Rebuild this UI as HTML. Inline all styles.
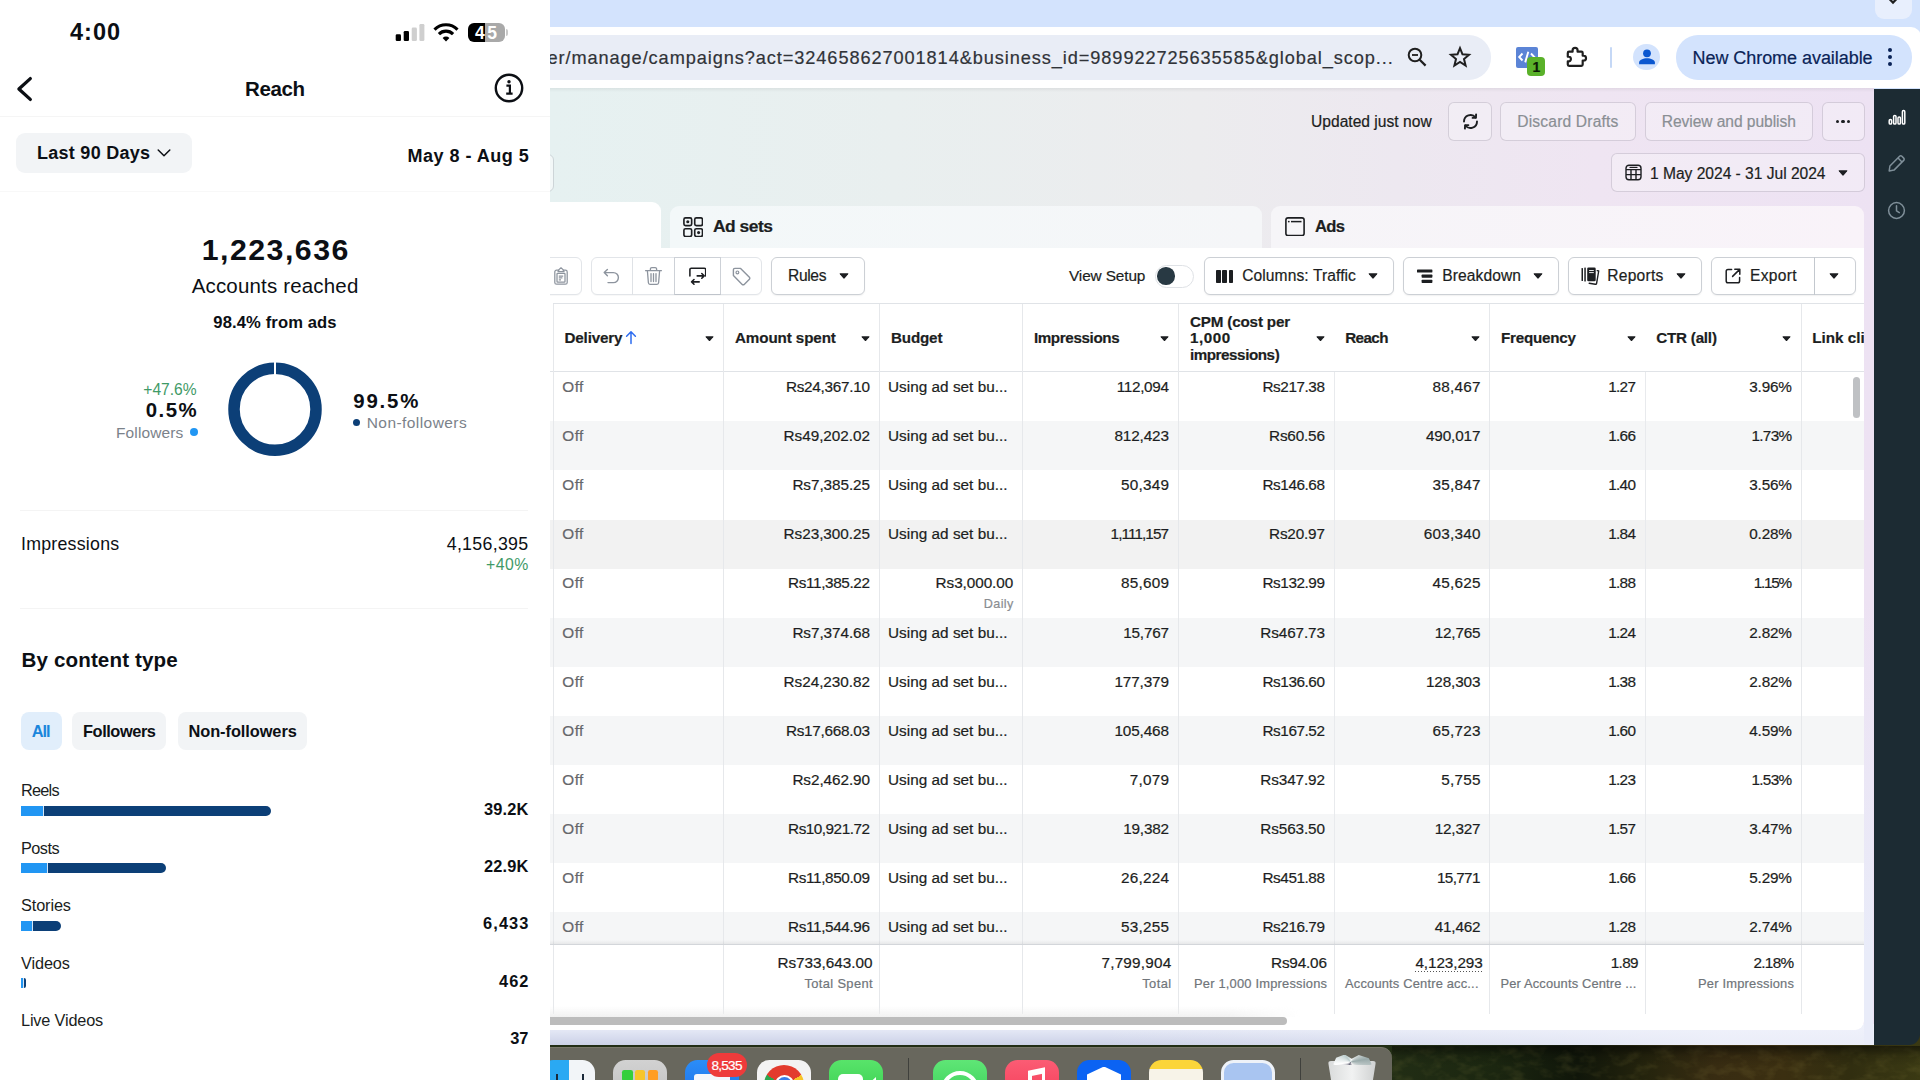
<!DOCTYPE html>
<html>
<head>
<meta charset="utf-8">
<title>Reach</title>
<style>
*{box-sizing:border-box;margin:0;padding:0}
html,body{width:1920px;height:1080px;overflow:hidden;background:#fff;font-family:"Liberation Sans",sans-serif;color:#1c1e21}
.abs{position:absolute}
.t{position:absolute;white-space:nowrap;line-height:1}
.b{font-weight:bold}
/* ---------- PHONE ---------- */
#phone{position:absolute;left:0;top:0;width:550px;height:1080px;background:#fff;overflow:hidden;color:#0f1419;z-index:5}
#phone .sep{position:absolute;height:1px;background:#efefef}
.chip{position:absolute;height:39px;top:711px;border-radius:8px;background:#f1f3f5;font-weight:bold;font-size:15.5px;line-height:39px;text-align:center;color:#111}
.ct-l{position:absolute;left:21px;font-size:15px;line-height:1;color:#222}
.ct-v{position:absolute;right:21px;font-size:15.5px;font-weight:bold;line-height:1;color:#111}
.bar{position:absolute;left:21px;height:9px;border-radius:0 5px 5px 0;background:#0b3c73;overflow:hidden}
.bar i{position:absolute;left:0;top:0;bottom:0;background:#1e96f0;border-right:1px solid #cfe3f7}
/* ---------- CHROME ---------- */
#chrome{position:absolute;left:0;top:0;width:1920px;height:1080px;overflow:hidden;color:#1c1e21}
#chrome .t{-webkit-text-stroke:0.2px}
.btn{position:absolute;border:1px solid #ccd0d5;border-radius:6px;background:#fff;box-shadow:0 1px 1px rgba(0,0,0,.04)}
.car{position:absolute;width:0;height:0;border-left:5px solid transparent;border-right:5px solid transparent;border-top:5.5px solid #1c1e21;border-radius:2px}
</style>
</head>
<body>
<div id="chrome">
<div class="abs" style="left:550.0px;top:1025.0px;width:1370.0px;height:55.0px;background:linear-gradient(90deg,#222e15 0%,#222e15 61%,#1b2610 69%,#10160a 75%,#25240d 80%,#382c12 85%,#3b2f11 90%,#312e10 95%,#3a3913 100%)"></div>
<svg class="abs" style="left:1392px;top:1046px" width="528" height="34"><filter id="nz" x="0" y="0" width="100%" height="100%"><feTurbulence type="fractalNoise" baseFrequency="0.06 0.1" numOctaves="3" seed="7"/><feColorMatrix type="matrix" values="0 0 0 0 0.5  0 0 0 0 0.42  0 0 0 0 0.1  1.5 0 0 0 -0.68"/></filter><rect width="528" height="34" filter="url(#nz)" opacity="0.22"/></svg>
<div class="abs" style="left:1392.0px;top:1046.0px;width:528.0px;height:34.0px;background:linear-gradient(180deg,rgba(0,0,0,.5) 0,rgba(0,0,0,.12) 10px,rgba(0,0,0,0) 20px)"></div>
<div class="abs" style="left:540.0px;top:1046.5px;width:851.5px;height:43.5px;background:#68675d;border-radius:0 11px 0 0;border-top:1px solid #787769"></div>
<div class="abs" style="left:550.0px;top:0.0px;width:1370.0px;height:90.0px;background:#d3e3fd"></div>
<div class="abs" style="left:1875.0px;top:-10.0px;width:37.0px;height:28.5px;background:#e8effd;border-radius:9px"></div>
<svg class="abs" style="left:1887px;top:-2px" width="12" height="8" viewBox="0 0 12 8"><path d="M1.5 0 L6 4.6 L10.5 0" fill="none" stroke="#1f1f1f" stroke-width="2.2"/></svg>
<div class="abs" style="left:540.0px;top:26.7px;width:1381.0px;height:61.5px;background:#fff;border-radius:0 10px 0 0"></div>
<div class="abs" style="left:500.0px;top:35.4px;width:991.0px;height:44.2px;background:#e9edf6;border-radius:22px"></div>
<div class="t" style="left:547.5px;top:48.5px;font-size:18.20px;letter-spacing:0.91px;color:#303338;">er/manage/campaigns?act=324658627001814&amp;business_id=989922725635585&amp;global_scop...</div>
<svg class="abs" style="left:1405px;top:45px" width="24" height="24" viewBox="0 0 24 24"><circle cx="10" cy="10" r="6.3" fill="none" stroke="#1f1f1f" stroke-width="2"/><path d="M14.7 14.7 L20.6 20.6" stroke="#1f1f1f" stroke-width="2.2"/><path d="M7 10 H13" stroke="#1f1f1f" stroke-width="1.8"/></svg>
<svg class="abs" style="left:1447.5px;top:45px" width="24" height="24" viewBox="0 0 24 24"><path d="M12 3.2 L14.5 9.3 L21 9.8 L16 14.1 L17.6 20.5 L12 17 L6.4 20.5 L8 14.1 L3 9.8 L9.5 9.3 Z" fill="none" stroke="#1f1f1f" stroke-width="2" stroke-linejoin="miter"/></svg>
<div class="abs" style="left:1516.0px;top:47.3px;width:21.5px;height:20.7px;background:#5b84d6;border-radius:2px"></div>
<svg class="abs" style="left:1516px;top:47.3px" width="21.5" height="20.7" viewBox="0 0 21.5 20.7"><path d="M6.5 6.5 L3.2 10 L6.5 13.5 M15 6.5 L18.3 10 L15 13.5 M12.3 4.8 L9.2 15.4" fill="none" stroke="#fff" stroke-width="1.9"/></svg>
<div class="abs" style="left:1526.8px;top:57.4px;width:18.6px;height:18.6px;background:#5ab12a;border-radius:4px"></div>
<div class="t" style="left:1532.6px;top:60.1px;font-size:14.00px;font-weight:bold;color:#0c1a05;">1</div>
<svg class="abs" style="left:1563px;top:44.5px" width="25" height="25" viewBox="0 0 24 24"><path d="M9.2 5.2 a2.4 2.4 0 0 1 4.8 0 V6.4 H17.7 a1.2 1.2 0 0 1 1.2 1.2 V10.3 H19.8 a2.3 2.3 0 0 1 0 4.6 H18.9 V18.8 a1.2 1.2 0 0 1 -1.2 1.2 H5.8 a1.2 1.2 0 0 1 -1.2 -1.2 V15.7 H5.4 a2.2 2.2 0 0 0 0 -4.4 H4.6 V7.6 a1.2 1.2 0 0 1 1.2 -1.2 H9.2 Z" fill="none" stroke="#1f1f1f" stroke-width="2.1" stroke-linejoin="round"/></svg>
<div class="abs" style="left:1609.6px;top:47.0px;width:2.2px;height:20.5px;background:#c5d8f6;border-radius:1px"></div>
<div class="abs" style="left:1633.4px;top:43.8px;width:26.4px;height:26.4px;background:#d3e3fd;border-radius:50%"></div>
<svg class="abs" style="left:1636.6px;top:47px" width="20" height="20" viewBox="0 0 20 20"><circle cx="10" cy="6.3" r="3.9" fill="#0b57d0"/><path d="M2.1 17.2 V15.6 C2.1 12.9 6.2 11.3 10 11.3 C13.8 11.3 17.9 12.9 17.9 15.6 V17.2 Z" fill="#0b57d0"/></svg>
<div class="abs" style="left:1675.8px;top:35.4px;width:236.5px;height:44.2px;background:#d3e3fd;border-radius:22px"></div>
<div class="t" style="left:1692.5px;top:49.0px;font-size:18.00px;letter-spacing:-0.05px;color:#0a2357;">New Chrome available</div>
<div class="abs" style="left:1888.4px;top:47.9px;width:4.0px;height:4.0px;background:#0a2357;border-radius:50%"></div>
<div class="abs" style="left:1888.4px;top:55.1px;width:4.0px;height:4.0px;background:#0a2357;border-radius:50%"></div>
<div class="abs" style="left:1888.4px;top:62.4px;width:4.0px;height:4.0px;background:#0a2357;border-radius:50%"></div>
<div class="abs" style="left:550.0px;top:88.0px;width:1323.5px;height:957.2px;background:linear-gradient(90deg,#e6f1f1 0%,#e9efef 26%,#ececee 49%,#ede8f0 64%,#efe5f2 79%,#ede2f3 100%)"></div>
<div class="abs" style="left:550.0px;top:88.0px;width:1323.5px;height:4.0px;background:linear-gradient(180deg,rgba(0,0,0,.06),rgba(0,0,0,0))"></div>
<div class="abs" style="left:550.0px;top:1024.0px;width:1323.5px;height:21.2px;background:linear-gradient(180deg,#eceff9 0%,#e2e6f4 35%,#d4d9ec 75%,#ccd2e6 100%)"></div>
<div class="abs" style="left:1100.0px;top:1024.0px;width:773.5px;height:21.2px;background:linear-gradient(90deg,rgba(240,242,251,0),rgba(240,242,251,.85) 80%)"></div>
<div class="abs" style="left:1864.3px;top:600.0px;width:9.2px;height:445.2px;background:linear-gradient(180deg,rgba(233,236,249,0),rgba(233,236,249,1) 80%)"></div>
<div class="abs" style="left:1873.5px;top:88.8px;width:46.5px;height:956.4px;background:#1c2b33;border-radius:0 0 11px 0"></div>
<svg class="abs" style="left:1887.5px;top:108px" width="18" height="18" viewBox="0 0 18 18"><g fill="none" stroke="#fff" stroke-width="1.5"><rect x="1.2" y="11.6" width="2.4" height="4.4" rx="1.1"/><rect x="5.6" y="7.4" width="2.4" height="8.6" rx="1.1"/><rect x="10" y="9" width="2.4" height="7" rx="1.1"/><rect x="14.4" y="2.6" width="2.4" height="13.4" rx="1.1"/></g></svg>
<svg class="abs" style="left:1887px;top:154px" width="19" height="19" viewBox="0 0 19 19"><path d="M12.6 2.3 a1.6 1.6 0 0 1 2.3 0 L16.7 4.1 a1.6 1.6 0 0 1 0 2.3 L7 16.1 L2.2 16.9 L2.9 12 Z M11 4 L15 8" fill="none" stroke="#7f8f99" stroke-width="1.5" stroke-linejoin="round"/></svg>
<svg class="abs" style="left:1887px;top:201px" width="19" height="19" viewBox="0 0 19 19"><circle cx="9.5" cy="9.5" r="7.9" fill="none" stroke="#7f8f99" stroke-width="1.5"/><path d="M9.5 4.8 V9.8 L12.3 11.6" fill="none" stroke="#7f8f99" stroke-width="1.5" stroke-linecap="round"/></svg>
<div class="abs" style="left:530.0px;top:153.5px;width:23.6px;height:38.8px;background:rgba(255,255,255,.5);border:1.3px solid #cdd5d8;border-radius:6px"></div>
<div class="t" style="left:1311.0px;top:114.1px;font-size:15.60px;letter-spacing:0.01px;color:#1c1e21;">Updated just now</div>
<div class="abs" style="left:1448.3px;top:102.0px;width:43.4px;height:38.7px;border:1px solid rgba(40,30,60,.15);border-radius:6px;background:rgba(255,255,255,.28)"></div>
<svg class="abs" style="left:1460.6px;top:111.8px" width="19" height="19" viewBox="0 0 19 19"><g fill="none" stroke="#1c1e21" stroke-width="1.9" stroke-linecap="round" stroke-linejoin="round"><path d="M3 9.6 A6.5 6.5 0 0 1 14.6 5.5"/><path d="M16 9.4 A6.5 6.5 0 0 1 4.4 13.5"/><path d="M11.6 5.9 L14.9 5.7 L15.1 2.4"/><path d="M7.4 13.1 L4.1 13.3 L3.9 16.6"/></g></svg>
<div class="abs" style="left:1500.0px;top:102.0px;width:135.7px;height:38.7px;border:1px solid rgba(40,30,60,.15);border-radius:6px;background:rgba(255,255,255,.28)"></div>
<div class="t" style="left:1517.3px;top:114.1px;font-size:15.60px;letter-spacing:0.17px;color:#8a8f94;">Discard Drafts</div>
<div class="abs" style="left:1644.7px;top:102.0px;width:168.0px;height:38.7px;border:1px solid rgba(40,30,60,.15);border-radius:6px;background:rgba(255,255,255,.28)"></div>
<div class="t" style="left:1661.7px;top:114.1px;font-size:15.60px;letter-spacing:-0.06px;color:#8a8f94;">Review and publish</div>
<div class="abs" style="left:1821.7px;top:102.0px;width:43.3px;height:38.7px;border:1px solid rgba(40,30,60,.15);border-radius:6px;background:rgba(255,255,255,.28)"></div>
<div class="abs" style="left:1836.0px;top:119.5px;width:3.2px;height:3.2px;background:#1c1e21;border-radius:50%"></div>
<div class="abs" style="left:1841.4px;top:119.5px;width:3.2px;height:3.2px;background:#1c1e21;border-radius:50%"></div>
<div class="abs" style="left:1846.8px;top:119.5px;width:3.2px;height:3.2px;background:#1c1e21;border-radius:50%"></div>
<div class="abs" style="left:1611.0px;top:153.3px;width:254.0px;height:38.3px;border:1px solid rgba(40,30,60,.15);border-radius:6px;background:rgba(255,255,255,.28)"></div>
<svg class="abs" style="left:1624.5px;top:164px" width="17" height="17" viewBox="0 0 17 17"><g fill="none" stroke="#1c1e21" stroke-width="1.4"><rect x="1" y="1.2" width="15" height="14.6" rx="3"/><path d="M1 5.6 H16 M1 10.6 H16 M6 5.6 V15.8 M11 5.6 V15.8"/></g><path d="M4.5 3.4 H12.5" stroke="#1c1e21" stroke-width="1.2"/></svg>
<div class="t" style="left:1650.0px;top:165.5px;font-size:15.60px;letter-spacing:-0.02px;color:#1c1e21;">1 May 2024 - 31 Jul 2024</div>
<svg class="abs" style="left:1838.3px;top:170.0px" width="10.0" height="6.0" viewBox="0 0 10 6"><path d="M1.2 0.3 H8.8 Q9.9 0.3 9.1 1.3 L5.7 5.3 Q5 6 4.3 5.3 L0.9 1.3 Q0.1 0.3 1.2 0.3Z" fill="#1c1e21"/></svg>
<div class="abs" style="left:540.0px;top:201.7px;width:121.0px;height:48.3px;background:#fff;border-radius:0 9px 0 0"></div>
<div class="abs" style="left:670.0px;top:205.7px;width:592.0px;height:44.3px;background:linear-gradient(90deg,#f3f8f9,#f5f6f8);border-radius:9px 9px 0 0"></div>
<svg class="abs" style="left:683px;top:216.6px" width="20.4" height="20.4" viewBox="0 0 20 20"><g fill="none" stroke="#1c1e21" stroke-width="1.6"><rect x="0.9" y="0.9" width="7.6" height="7.6" rx="1.6"/><rect x="11.5" y="0.9" width="7.6" height="7.6" rx="1.6"/><rect x="0.9" y="11.5" width="7.6" height="7.6" rx="1.6"/><rect x="11.5" y="11.5" width="7.6" height="7.6" rx="1.6"/></g><circle cx="4.7" cy="4.7" r="1.5" fill="#1c1e21"/><circle cx="15.3" cy="15.3" r="1.5" fill="#1c1e21"/></svg>
<div class="t" style="left:713.0px;top:218.1px;font-size:17.40px;letter-spacing:-0.48px;font-weight:bold;color:#1c1e21;">Ad sets</div>
<div class="abs" style="left:1271.0px;top:205.7px;width:593.3px;height:44.3px;background:linear-gradient(90deg,#f6f5f8,#f9f3f9);border-radius:9px 9px 0 0"></div>
<svg class="abs" style="left:1284.5px;top:216.8px" width="20" height="19.5" viewBox="0 0 20 19.5"><rect x="0.9" y="0.9" width="18.2" height="17.7" rx="2.2" fill="none" stroke="#1c1e21" stroke-width="1.6"/><path d="M6 4.6 H16.5" stroke="#1c1e21" stroke-width="1.5"/><circle cx="3.8" cy="4.6" r="0.9" fill="#1c1e21"/></svg>
<div class="t" style="left:1315.0px;top:218.9px;font-size:16.60px;letter-spacing:-0.68px;font-weight:bold;color:#1c1e21;">Ads</div>
<div class="abs" style="left:540.0px;top:248.0px;width:1324.3px;height:781.5px;background:#fff;border-radius:0 0 9px 0"></div>
<div class="abs" style="left:553.4px;top:303.4px;width:1310.9px;height:68.1px;background:#fff"></div>
<div class="t" style="left:562.3px;top:379.2px;font-size:15.30px;letter-spacing:0.44px;color:#65676b;">Off</div>
<div class="t" style="left:785.9px;top:379.2px;font-size:15.30px;letter-spacing:-0.26px;color:#1c1e21;">Rs24,367.10</div>
<div class="t" style="left:888.0px;top:379.2px;font-size:15.30px;letter-spacing:0.03px;color:#1c1e21;">Using ad set bu...</div>
<div class="t" style="left:1116.8px;top:379.2px;font-size:15.30px;letter-spacing:-0.33px;color:#1c1e21;">112,094</div>
<div class="t" style="left:1262.5px;top:379.2px;font-size:15.30px;letter-spacing:-0.44px;color:#1c1e21;">Rs217.38</div>
<div class="t" style="left:1432.5px;top:379.2px;font-size:15.30px;letter-spacing:0.23px;color:#1c1e21;">88,467</div>
<div class="t" style="left:1608.2px;top:379.2px;font-size:15.30px;letter-spacing:-0.68px;color:#1c1e21;">1.27</div>
<div class="t" style="left:1749.2px;top:379.2px;font-size:15.30px;letter-spacing:-0.15px;color:#1c1e21;">3.96%</div>
<div class="abs" style="left:550.0px;top:421.4px;width:1314.3px;height:49.1px;background:#f5f6f7"></div>
<div class="t" style="left:562.3px;top:428.3px;font-size:15.30px;letter-spacing:0.44px;color:#65676b;">Off</div>
<div class="t" style="left:783.6px;top:428.3px;font-size:15.30px;letter-spacing:-0.04px;color:#1c1e21;">Rs49,202.02</div>
<div class="t" style="left:888.0px;top:428.3px;font-size:15.30px;letter-spacing:0.03px;color:#1c1e21;">Using ad set bu...</div>
<div class="t" style="left:1114.5px;top:428.3px;font-size:15.30px;letter-spacing:-0.14px;color:#1c1e21;">812,423</div>
<div class="t" style="left:1269.0px;top:428.3px;font-size:15.30px;letter-spacing:-0.17px;color:#1c1e21;">Rs60.56</div>
<div class="t" style="left:1426.0px;top:428.3px;font-size:15.30px;letter-spacing:-0.14px;color:#1c1e21;">490,017</div>
<div class="t" style="left:1608.2px;top:428.3px;font-size:15.30px;letter-spacing:-0.68px;color:#1c1e21;">1.66</div>
<div class="t" style="left:1751.5px;top:428.3px;font-size:15.30px;letter-spacing:-0.71px;color:#1c1e21;">1.73%</div>
<div class="t" style="left:562.3px;top:477.3px;font-size:15.30px;letter-spacing:0.44px;color:#65676b;">Off</div>
<div class="t" style="left:792.4px;top:477.3px;font-size:15.30px;letter-spacing:-0.07px;color:#1c1e21;">Rs7,385.25</div>
<div class="t" style="left:888.0px;top:477.3px;font-size:15.30px;letter-spacing:0.03px;color:#1c1e21;">Using ad set bu...</div>
<div class="t" style="left:1121.0px;top:477.3px;font-size:15.30px;letter-spacing:0.23px;color:#1c1e21;">50,349</div>
<div class="t" style="left:1262.5px;top:477.3px;font-size:15.30px;letter-spacing:-0.44px;color:#1c1e21;">Rs146.68</div>
<div class="t" style="left:1432.5px;top:477.3px;font-size:15.30px;letter-spacing:0.23px;color:#1c1e21;">35,847</div>
<div class="t" style="left:1608.2px;top:477.3px;font-size:15.30px;letter-spacing:-0.68px;color:#1c1e21;">1.40</div>
<div class="t" style="left:1749.2px;top:477.3px;font-size:15.30px;letter-spacing:-0.15px;color:#1c1e21;">3.56%</div>
<div class="abs" style="left:550.0px;top:519.5px;width:1314.3px;height:49.0px;background:#f2f2f2"></div>
<div class="t" style="left:562.3px;top:526.4px;font-size:15.30px;letter-spacing:0.44px;color:#65676b;">Off</div>
<div class="t" style="left:783.6px;top:526.4px;font-size:15.30px;letter-spacing:-0.04px;color:#1c1e21;">Rs23,300.25</div>
<div class="t" style="left:888.0px;top:526.4px;font-size:15.30px;letter-spacing:0.03px;color:#1c1e21;">Using ad set bu...</div>
<div class="t" style="left:1110.6px;top:526.4px;font-size:15.30px;letter-spacing:-0.92px;color:#1c1e21;">1,111,157</div>
<div class="t" style="left:1269.0px;top:526.4px;font-size:15.30px;letter-spacing:-0.17px;color:#1c1e21;">Rs20.97</div>
<div class="t" style="left:1423.8px;top:526.4px;font-size:15.30px;letter-spacing:0.23px;color:#1c1e21;">603,340</div>
<div class="t" style="left:1608.2px;top:526.4px;font-size:15.30px;letter-spacing:-0.68px;color:#1c1e21;">1.84</div>
<div class="t" style="left:1749.2px;top:526.4px;font-size:15.30px;letter-spacing:-0.15px;color:#1c1e21;">0.28%</div>
<div class="t" style="left:562.3px;top:575.4px;font-size:15.30px;letter-spacing:0.44px;color:#65676b;">Off</div>
<div class="t" style="left:788.1px;top:575.4px;font-size:15.30px;letter-spacing:-0.37px;color:#1c1e21;">Rs11,385.22</div>
<div class="t" style="left:935.6px;top:575.4px;font-size:15.30px;letter-spacing:-0.07px;color:#1c1e21;">Rs3,000.00</div>
<div class="t" style="left:983.8px;top:598.3px;font-size:12.60px;letter-spacing:0.37px;color:#8a8d91;">Daily</div>
<div class="t" style="left:1121.0px;top:575.4px;font-size:15.30px;letter-spacing:0.23px;color:#1c1e21;">85,609</div>
<div class="t" style="left:1262.5px;top:575.4px;font-size:15.30px;letter-spacing:-0.44px;color:#1c1e21;">Rs132.99</div>
<div class="t" style="left:1432.5px;top:575.4px;font-size:15.30px;letter-spacing:0.23px;color:#1c1e21;">45,625</div>
<div class="t" style="left:1608.2px;top:575.4px;font-size:15.30px;letter-spacing:-0.68px;color:#1c1e21;">1.88</div>
<div class="t" style="left:1753.7px;top:575.4px;font-size:15.30px;letter-spacing:-1.27px;color:#1c1e21;">1.15%</div>
<div class="abs" style="left:550.0px;top:617.6px;width:1314.3px;height:49.0px;background:#f5f6f7"></div>
<div class="t" style="left:562.3px;top:624.5px;font-size:15.30px;letter-spacing:0.44px;color:#65676b;">Off</div>
<div class="t" style="left:792.4px;top:624.5px;font-size:15.30px;letter-spacing:-0.07px;color:#1c1e21;">Rs7,374.68</div>
<div class="t" style="left:888.0px;top:624.5px;font-size:15.30px;letter-spacing:0.03px;color:#1c1e21;">Using ad set bu...</div>
<div class="t" style="left:1123.3px;top:624.5px;font-size:15.30px;letter-spacing:-0.22px;color:#1c1e21;">15,767</div>
<div class="t" style="left:1260.3px;top:624.5px;font-size:15.30px;letter-spacing:-0.11px;color:#1c1e21;">Rs467.73</div>
<div class="t" style="left:1434.8px;top:624.5px;font-size:15.30px;letter-spacing:-0.22px;color:#1c1e21;">12,765</div>
<div class="t" style="left:1608.2px;top:624.5px;font-size:15.30px;letter-spacing:-0.68px;color:#1c1e21;">1.24</div>
<div class="t" style="left:1749.2px;top:624.5px;font-size:15.30px;letter-spacing:-0.15px;color:#1c1e21;">2.82%</div>
<div class="t" style="left:562.3px;top:673.5px;font-size:15.30px;letter-spacing:0.44px;color:#65676b;">Off</div>
<div class="t" style="left:783.6px;top:673.5px;font-size:15.30px;letter-spacing:-0.04px;color:#1c1e21;">Rs24,230.82</div>
<div class="t" style="left:888.0px;top:673.5px;font-size:15.30px;letter-spacing:0.03px;color:#1c1e21;">Using ad set bu...</div>
<div class="t" style="left:1114.5px;top:673.5px;font-size:15.30px;letter-spacing:-0.14px;color:#1c1e21;">177,379</div>
<div class="t" style="left:1262.5px;top:673.5px;font-size:15.30px;letter-spacing:-0.44px;color:#1c1e21;">Rs136.60</div>
<div class="t" style="left:1426.0px;top:673.5px;font-size:15.30px;letter-spacing:-0.14px;color:#1c1e21;">128,303</div>
<div class="t" style="left:1608.2px;top:673.5px;font-size:15.30px;letter-spacing:-0.68px;color:#1c1e21;">1.38</div>
<div class="t" style="left:1749.2px;top:673.5px;font-size:15.30px;letter-spacing:-0.15px;color:#1c1e21;">2.82%</div>
<div class="abs" style="left:550.0px;top:715.8px;width:1314.3px;height:49.0px;background:#f5f6f7"></div>
<div class="t" style="left:562.3px;top:722.6px;font-size:15.30px;letter-spacing:0.44px;color:#65676b;">Off</div>
<div class="t" style="left:785.9px;top:722.6px;font-size:15.30px;letter-spacing:-0.26px;color:#1c1e21;">Rs17,668.03</div>
<div class="t" style="left:888.0px;top:722.6px;font-size:15.30px;letter-spacing:0.03px;color:#1c1e21;">Using ad set bu...</div>
<div class="t" style="left:1114.5px;top:722.6px;font-size:15.30px;letter-spacing:-0.14px;color:#1c1e21;">105,468</div>
<div class="t" style="left:1262.5px;top:722.6px;font-size:15.30px;letter-spacing:-0.44px;color:#1c1e21;">Rs167.52</div>
<div class="t" style="left:1432.5px;top:722.6px;font-size:15.30px;letter-spacing:0.23px;color:#1c1e21;">65,723</div>
<div class="t" style="left:1608.2px;top:722.6px;font-size:15.30px;letter-spacing:-0.68px;color:#1c1e21;">1.60</div>
<div class="t" style="left:1749.2px;top:722.6px;font-size:15.30px;letter-spacing:-0.15px;color:#1c1e21;">4.59%</div>
<div class="t" style="left:562.3px;top:771.6px;font-size:15.30px;letter-spacing:0.44px;color:#65676b;">Off</div>
<div class="t" style="left:792.4px;top:771.6px;font-size:15.30px;letter-spacing:-0.07px;color:#1c1e21;">Rs2,462.90</div>
<div class="t" style="left:888.0px;top:771.6px;font-size:15.30px;letter-spacing:0.03px;color:#1c1e21;">Using ad set bu...</div>
<div class="t" style="left:1129.8px;top:771.6px;font-size:15.30px;letter-spacing:0.23px;color:#1c1e21;">7,079</div>
<div class="t" style="left:1260.3px;top:771.6px;font-size:15.30px;letter-spacing:-0.11px;color:#1c1e21;">Rs347.92</div>
<div class="t" style="left:1441.3px;top:771.6px;font-size:15.30px;letter-spacing:0.23px;color:#1c1e21;">5,755</div>
<div class="t" style="left:1608.2px;top:771.6px;font-size:15.30px;letter-spacing:-0.68px;color:#1c1e21;">1.23</div>
<div class="t" style="left:1751.5px;top:771.6px;font-size:15.30px;letter-spacing:-0.71px;color:#1c1e21;">1.53%</div>
<div class="abs" style="left:550.0px;top:813.8px;width:1314.3px;height:49.0px;background:#f5f6f7"></div>
<div class="t" style="left:562.3px;top:820.7px;font-size:15.30px;letter-spacing:0.44px;color:#65676b;">Off</div>
<div class="t" style="left:788.1px;top:820.7px;font-size:15.30px;letter-spacing:-0.49px;color:#1c1e21;">Rs10,921.72</div>
<div class="t" style="left:888.0px;top:820.7px;font-size:15.30px;letter-spacing:0.03px;color:#1c1e21;">Using ad set bu...</div>
<div class="t" style="left:1123.3px;top:820.7px;font-size:15.30px;letter-spacing:-0.22px;color:#1c1e21;">19,382</div>
<div class="t" style="left:1260.3px;top:820.7px;font-size:15.30px;letter-spacing:-0.11px;color:#1c1e21;">Rs563.50</div>
<div class="t" style="left:1434.8px;top:820.7px;font-size:15.30px;letter-spacing:-0.22px;color:#1c1e21;">12,327</div>
<div class="t" style="left:1608.2px;top:820.7px;font-size:15.30px;letter-spacing:-0.68px;color:#1c1e21;">1.57</div>
<div class="t" style="left:1749.2px;top:820.7px;font-size:15.30px;letter-spacing:-0.15px;color:#1c1e21;">3.47%</div>
<div class="t" style="left:562.3px;top:869.7px;font-size:15.30px;letter-spacing:0.44px;color:#65676b;">Off</div>
<div class="t" style="left:788.1px;top:869.7px;font-size:15.30px;letter-spacing:-0.37px;color:#1c1e21;">Rs11,850.09</div>
<div class="t" style="left:888.0px;top:869.7px;font-size:15.30px;letter-spacing:0.03px;color:#1c1e21;">Using ad set bu...</div>
<div class="t" style="left:1121.0px;top:869.7px;font-size:15.30px;letter-spacing:0.23px;color:#1c1e21;">26,224</div>
<div class="t" style="left:1262.5px;top:869.7px;font-size:15.30px;letter-spacing:-0.44px;color:#1c1e21;">Rs451.88</div>
<div class="t" style="left:1437.0px;top:869.7px;font-size:15.30px;letter-spacing:-0.67px;color:#1c1e21;">15,771</div>
<div class="t" style="left:1608.2px;top:869.7px;font-size:15.30px;letter-spacing:-0.68px;color:#1c1e21;">1.66</div>
<div class="t" style="left:1749.2px;top:869.7px;font-size:15.30px;letter-spacing:-0.15px;color:#1c1e21;">5.29%</div>
<div class="abs" style="left:550.0px;top:911.9px;width:1314.3px;height:32.1px;background:#f5f6f7"></div>
<div class="t" style="left:562.3px;top:918.8px;font-size:15.30px;letter-spacing:0.44px;color:#65676b;">Off</div>
<div class="t" style="left:788.1px;top:918.8px;font-size:15.30px;letter-spacing:-0.37px;color:#1c1e21;">Rs11,544.96</div>
<div class="t" style="left:888.0px;top:918.8px;font-size:15.30px;letter-spacing:0.03px;color:#1c1e21;">Using ad set bu...</div>
<div class="t" style="left:1121.0px;top:918.8px;font-size:15.30px;letter-spacing:0.23px;color:#1c1e21;">53,255</div>
<div class="t" style="left:1262.5px;top:918.8px;font-size:15.30px;letter-spacing:-0.44px;color:#1c1e21;">Rs216.79</div>
<div class="t" style="left:1434.8px;top:918.8px;font-size:15.30px;letter-spacing:-0.22px;color:#1c1e21;">41,462</div>
<div class="t" style="left:1608.2px;top:918.8px;font-size:15.30px;letter-spacing:-0.68px;color:#1c1e21;">1.28</div>
<div class="t" style="left:1749.2px;top:918.8px;font-size:15.30px;letter-spacing:-0.15px;color:#1c1e21;">2.74%</div>
<div class="t" style="left:564.5px;top:329.7px;font-size:15.20px;letter-spacing:-0.16px;font-weight:bold;color:#1c1e21;">Delivery</div>
<svg class="abs" style="left:623.5px;top:329.5px" width="14" height="15" viewBox="0 0 14 15"><path d="M7 13.4 V2 M2.6 6.2 L7 1.8 L11.4 6.2" fill="none" stroke="#2d6cf0" stroke-width="1.5" stroke-linecap="round" stroke-linejoin="round"/></svg>
<svg class="abs" style="left:705.0px;top:335.9px" width="9.0" height="5.4" viewBox="0 0 10 6"><path d="M1.2 0.3 H8.8 Q9.9 0.3 9.1 1.3 L5.7 5.3 Q5 6 4.3 5.3 L0.9 1.3 Q0.1 0.3 1.2 0.3Z" fill="#1c1e21"/></svg>
<div class="t" style="left:735.0px;top:329.7px;font-size:15.20px;letter-spacing:-0.11px;font-weight:bold;color:#1c1e21;">Amount spent</div>
<svg class="abs" style="left:860.5px;top:335.9px" width="9.0" height="5.4" viewBox="0 0 10 6"><path d="M1.2 0.3 H8.8 Q9.9 0.3 9.1 1.3 L5.7 5.3 Q5 6 4.3 5.3 L0.9 1.3 Q0.1 0.3 1.2 0.3Z" fill="#1c1e21"/></svg>
<div class="t" style="left:891.0px;top:330.2px;font-size:15.20px;letter-spacing:-0.17px;font-weight:bold;color:#1c1e21;">Budget</div>
<div class="t" style="left:1033.9px;top:329.7px;font-size:15.20px;letter-spacing:-0.37px;font-weight:bold;color:#1c1e21;">Impressions</div>
<svg class="abs" style="left:1159.5px;top:335.9px" width="9.0" height="5.4" viewBox="0 0 10 6"><path d="M1.2 0.3 H8.8 Q9.9 0.3 9.1 1.3 L5.7 5.3 Q5 6 4.3 5.3 L0.9 1.3 Q0.1 0.3 1.2 0.3Z" fill="#1c1e21"/></svg>
<div class="t" style="left:1189.9px;top:313.5px;font-size:15.20px;letter-spacing:-0.15px;font-weight:bold;color:#1c1e21;">CPM (cost per</div>
<div class="t" style="left:1189.9px;top:330.3px;font-size:15.20px;letter-spacing:0.59px;font-weight:bold;color:#1c1e21;">1,000</div>
<div class="t" style="left:1189.9px;top:347.3px;font-size:15.20px;letter-spacing:-0.43px;font-weight:bold;color:#1c1e21;">impressions)</div>
<svg class="abs" style="left:1315.5px;top:335.9px" width="9.0" height="5.4" viewBox="0 0 10 6"><path d="M1.2 0.3 H8.8 Q9.9 0.3 9.1 1.3 L5.7 5.3 Q5 6 4.3 5.3 L0.9 1.3 Q0.1 0.3 1.2 0.3Z" fill="#1c1e21"/></svg>
<div class="t" style="left:1345.2px;top:329.7px;font-size:15.20px;letter-spacing:-0.58px;font-weight:bold;color:#1c1e21;">Reach</div>
<svg class="abs" style="left:1470.7px;top:335.9px" width="9.0" height="5.4" viewBox="0 0 10 6"><path d="M1.2 0.3 H8.8 Q9.9 0.3 9.1 1.3 L5.7 5.3 Q5 6 4.3 5.3 L0.9 1.3 Q0.1 0.3 1.2 0.3Z" fill="#1c1e21"/></svg>
<div class="t" style="left:1501.0px;top:329.7px;font-size:15.20px;letter-spacing:-0.23px;font-weight:bold;color:#1c1e21;">Frequency</div>
<svg class="abs" style="left:1626.7px;top:335.9px" width="9.0" height="5.4" viewBox="0 0 10 6"><path d="M1.2 0.3 H8.8 Q9.9 0.3 9.1 1.3 L5.7 5.3 Q5 6 4.3 5.3 L0.9 1.3 Q0.1 0.3 1.2 0.3Z" fill="#1c1e21"/></svg>
<div class="t" style="left:1656.2px;top:329.7px;font-size:15.20px;letter-spacing:-0.21px;font-weight:bold;color:#1c1e21;">CTR (all)</div>
<svg class="abs" style="left:1782.1px;top:335.9px" width="9.0" height="5.4" viewBox="0 0 10 6"><path d="M1.2 0.3 H8.8 Q9.9 0.3 9.1 1.3 L5.7 5.3 Q5 6 4.3 5.3 L0.9 1.3 Q0.1 0.3 1.2 0.3Z" fill="#1c1e21"/></svg>
<div class="abs" style="left:1805.0px;top:320.0px;width:59.3px;height:40.0px;overflow:hidden"><div class="t" style="left:7.3px;top:9.7px;font-size:15.20px;font-weight:bold;color:#1c1e21;">Link clicks</div></div>
<div class="abs" style="left:553.4px;top:303.0px;width:1310.9px;height:1.0px;background:#e0e3e7"></div>
<div class="abs" style="left:550.0px;top:371.0px;width:1314.3px;height:1.0px;background:#e0e3e7"></div>
<div class="abs" style="left:553.4px;top:304.0px;width:1.0px;height:709.5px;background:#e6e8eb"></div>
<div class="abs" style="left:723.3px;top:304.0px;width:1.0px;height:709.5px;background:#e6e8eb"></div>
<div class="abs" style="left:879.3px;top:304.0px;width:1.0px;height:709.5px;background:#e6e8eb"></div>
<div class="abs" style="left:1022.4px;top:304.0px;width:1.0px;height:709.5px;background:#e6e8eb"></div>
<div class="abs" style="left:1178.2px;top:304.0px;width:1.0px;height:709.5px;background:#e6e8eb"></div>
<div class="abs" style="left:1333.5px;top:372.0px;width:1.0px;height:641.5px;background:#e8eaed"></div>
<div class="abs" style="left:1489.3px;top:304.0px;width:1.0px;height:709.5px;background:#e6e8eb"></div>
<div class="abs" style="left:1645.0px;top:372.0px;width:1.0px;height:641.5px;background:#e8eaed"></div>
<div class="abs" style="left:1801.2px;top:304.0px;width:1.0px;height:709.5px;background:#e6e8eb"></div>
<div class="abs" style="left:1852.8px;top:377.0px;width:7.0px;height:41.0px;background:#bfc1c4;border-radius:4px"></div>
<div class="abs" style="left:550.0px;top:944.5px;width:1314.3px;height:69.5px;background:#fff"></div>
<div class="abs" style="left:550.0px;top:939.5px;width:1314.3px;height:5.0px;background:linear-gradient(180deg,rgba(0,0,0,0),rgba(0,0,0,.07))"></div>
<div class="abs" style="left:550.0px;top:944.0px;width:1314.3px;height:1.2px;background:#d3d6da"></div>
<div class="abs" style="left:553.4px;top:945.0px;width:1.0px;height:68.5px;background:#e6e8eb"></div>
<div class="abs" style="left:723.3px;top:945.0px;width:1.0px;height:68.5px;background:#e6e8eb"></div>
<div class="abs" style="left:879.3px;top:945.0px;width:1.0px;height:68.5px;background:#e6e8eb"></div>
<div class="abs" style="left:1022.4px;top:945.0px;width:1.0px;height:68.5px;background:#e6e8eb"></div>
<div class="abs" style="left:1178.2px;top:945.0px;width:1.0px;height:68.5px;background:#e6e8eb"></div>
<div class="abs" style="left:1333.5px;top:945.0px;width:1.0px;height:68.5px;background:#e6e8eb"></div>
<div class="abs" style="left:1489.3px;top:945.0px;width:1.0px;height:68.5px;background:#e6e8eb"></div>
<div class="abs" style="left:1645.0px;top:945.0px;width:1.0px;height:68.5px;background:#e6e8eb"></div>
<div class="abs" style="left:1801.2px;top:945.0px;width:1.0px;height:68.5px;background:#e6e8eb"></div>
<div class="t" style="left:777.4px;top:955.2px;font-size:15.30px;letter-spacing:-0.01px;color:#1c1e21;">Rs733,643.00</div>
<div class="t" style="left:804.5px;top:977.5px;font-size:12.90px;letter-spacing:0.35px;color:#70757a;">Total Spent</div>
<div class="t" style="left:1101.5px;top:955.2px;font-size:15.30px;letter-spacing:0.20px;color:#1c1e21;">7,799,904</div>
<div class="t" style="left:1142.2px;top:977.5px;font-size:12.90px;letter-spacing:0.44px;color:#70757a;">Total</div>
<div class="t" style="left:1271.0px;top:955.2px;font-size:15.30px;letter-spacing:-0.17px;color:#1c1e21;">Rs94.06</div>
<div class="t" style="left:1194.0px;top:977.5px;font-size:12.90px;letter-spacing:0.20px;color:#70757a;">Per 1,000 Impressions</div>
<div class="t" style="left:1415.4px;top:955.2px;font-size:15.30px;letter-spacing:-0.08px;color:#1c1e21;">4,123,293</div>
<div class="abs" style="left:1414.5px;top:970.6px;width:68.5px;height:1.2px;background:repeating-linear-gradient(90deg,#555 0,#555 1.2px,transparent 1.2px,transparent 3px)"></div>
<div class="t" style="left:1345.0px;top:977.5px;font-size:12.90px;letter-spacing:0.18px;color:#70757a;">Accounts Centre acc...</div>
<div class="t" style="left:1610.8px;top:955.2px;font-size:15.30px;letter-spacing:-0.68px;color:#1c1e21;">1.89</div>
<div class="t" style="left:1500.5px;top:977.5px;font-size:12.90px;letter-spacing:0.15px;color:#70757a;">Per Accounts Centre ...</div>
<div class="t" style="left:1753.5px;top:955.2px;font-size:15.30px;letter-spacing:-0.71px;color:#1c1e21;">2.18%</div>
<div class="t" style="left:1698.0px;top:977.5px;font-size:12.90px;letter-spacing:0.20px;color:#70757a;">Per Impressions</div>
<div class="abs" style="left:550.0px;top:1006.0px;width:750.0px;height:10.8px;background:linear-gradient(180deg,rgba(255,255,255,0),rgba(238,238,238,.8));-webkit-mask-image:linear-gradient(90deg,#000 90%,transparent)"></div>
<div class="abs" style="left:550.0px;top:1016.8px;width:737.0px;height:7.8px;background:#bcbcbc;border-radius:0 4px 4px 0"></div>
<div class="abs" style="left:530.0px;top:257.0px;width:51.7px;height:38.0px;border:1px solid #e2e5e9;border-radius:6px;background:#fff;box-shadow:0 1px 1px rgba(0,0,0,.03)"></div>
<svg class="abs" style="left:554.2px;top:267.2px" width="14" height="18" viewBox="0 0 14 18"><g fill="none" stroke="#8d949e" stroke-width="1.25" stroke-linejoin="round"><rect x="0.8" y="3.2" width="12.4" height="14" rx="1.8"/><path d="M4 4.6 L5.2 2.4 L7 0.8 L8.8 2.4 L10 4.6 Z" fill="#fff"/><rect x="3" y="6.4" width="8" height="8.6" rx="0.6"/><path d="M4.8 9 H9.2 M4.8 10.9 H8.4 M4.8 12.8 H7"/></g></svg>
<div class="abs" style="left:591.0px;top:257.0px;width:171.0px;height:38.0px;border:1px solid #e2e5e9;border-radius:6px;background:#fff;box-shadow:0 1px 1px rgba(0,0,0,.03)"></div>
<div class="abs" style="left:632.0px;top:257.0px;width:1.0px;height:38.0px;background:#dfe2e6"></div>
<div class="abs" style="left:674.0px;top:257.0px;width:47.3px;height:38.4px;border:1px solid #cdd1d7;border-bottom-color:#bfc4cb;background:#fff"></div>
<svg class="abs" style="left:601.5px;top:266px" width="20" height="20" viewBox="0 0 20 20"><path d="M5.4 3.4 L2.2 6.6 L5.4 9.8 M2.6 6.6 H11.4 a5 5 0 0 1 0 10 H6" fill="none" stroke="#8d949e" stroke-width="1.4" stroke-linecap="round" stroke-linejoin="round"/></svg>
<svg class="abs" style="left:643.5px;top:266px" width="19" height="20" viewBox="0 0 19 20"><g fill="none" stroke="#8d949e" stroke-width="1.3" stroke-linecap="round"><path d="M1.6 4.7 H17.4"/><path d="M6.4 4.4 V3 a1.4 1.4 0 0 1 1.4 -1.4 H11.2 a1.4 1.4 0 0 1 1.4 1.4 V4.4"/><path d="M3.4 5 L4.4 16.8 a1.6 1.6 0 0 0 1.6 1.5 H13 a1.6 1.6 0 0 0 1.6 -1.5 L15.6 5"/><path d="M7 7.6 V15.6 M9.5 7.6 V15.6 M12 7.6 V15.6"/></g></svg>
<svg class="abs" style="left:688.6px;top:266.8px" width="17.6" height="18.6" viewBox="0 0 17.6 18.6"><g fill="none" stroke="#1c1e21" stroke-width="1.55" stroke-linecap="round" stroke-linejoin="round"><path d="M0.9 8.9 V2.6 a1.4 1.4 0 0 1 1.4 -1.4 H15.3 a1.4 1.4 0 0 1 1.4 1.4 V8.9"/><path d="M8.2 8.9 H15.2 M12.8 6.5 L15.2 8.9 L12.8 11.3"/><path d="M2.6 14.9 H10.2 M5 12.5 L2.6 14.9 L5 17.3"/></g></svg>
<svg class="abs" style="left:730.5px;top:265.5px" width="21" height="21" viewBox="0 0 21 21"><path d="M2.4 3.8 a1.4 1.4 0 0 1 1.4 -1.4 H9.6 L18.4 11.2 a1.4 1.4 0 0 1 0 2 L13.2 18.4 a1.4 1.4 0 0 1 -2 0 L2.4 9.6 Z" fill="none" stroke="#8d949e" stroke-width="1.4" stroke-linejoin="round"/><circle cx="6.4" cy="6.4" r="1.4" fill="none" stroke="#8d949e" stroke-width="1.2"/></svg>
<div class="abs" style="left:771.0px;top:257.0px;width:94.0px;height:38.0px;border:1px solid #ccd0d5;border-radius:6px;background:#fff;box-shadow:0 1px 1.5px rgba(0,0,0,.06)"></div>
<div class="t" style="left:788.0px;top:268.4px;font-size:15.60px;letter-spacing:-0.35px;color:#1c1e21;">Rules</div>
<svg class="abs" style="left:838.5px;top:273.2px" width="10.0" height="6.0" viewBox="0 0 10 6"><path d="M1.2 0.3 H8.8 Q9.9 0.3 9.1 1.3 L5.7 5.3 Q5 6 4.3 5.3 L0.9 1.3 Q0.1 0.3 1.2 0.3Z" fill="#1c1e21"/></svg>
<div class="t" style="left:1069.0px;top:268.3px;font-size:15.40px;letter-spacing:-0.13px;color:#1c1e21;">View Setup</div>
<div class="abs" style="left:1154.9px;top:264.5px;width:39.1px;height:23.0px;background:#fff;border:1px solid #dfe2e6;border-radius:12px"></div>
<div class="abs" style="left:1157.2px;top:267.2px;width:17.4px;height:17.4px;background:#283943;border-radius:50%"></div>
<div class="abs" style="left:1203.5px;top:257.0px;width:190.9px;height:38.0px;border:1px solid #ccd0d5;border-radius:6px;background:#fff;box-shadow:0 1px 1.5px rgba(0,0,0,.06)"></div>
<div class="abs" style="left:1216.2px;top:269.6px;width:4.4px;height:13.2px;background:#1c1e21;border-radius:0.8px"></div>
<div class="abs" style="left:1222.4px;top:269.6px;width:4.4px;height:13.2px;background:#1c1e21;border-radius:0.8px"></div>
<div class="abs" style="left:1228.6px;top:269.6px;width:4.4px;height:13.2px;background:#1c1e21;border-radius:0.8px"></div>
<div class="t" style="left:1242.2px;top:268.4px;font-size:15.60px;letter-spacing:0.09px;color:#1c1e21;">Columns: Traffic</div>
<svg class="abs" style="left:1368.4px;top:273.2px" width="10.0" height="6.0" viewBox="0 0 10 6"><path d="M1.2 0.3 H8.8 Q9.9 0.3 9.1 1.3 L5.7 5.3 Q5 6 4.3 5.3 L0.9 1.3 Q0.1 0.3 1.2 0.3Z" fill="#1c1e21"/></svg>
<div class="abs" style="left:1403.3px;top:257.0px;width:156.0px;height:38.0px;border:1px solid #ccd0d5;border-radius:6px;background:#fff;box-shadow:0 1px 1.5px rgba(0,0,0,.06)"></div>
<svg class="abs" style="left:1417.3px;top:268.6px" width="16" height="15" viewBox="0 0 16 15"><g fill="#1c1e21"><rect x="0" y="0.4" width="15.4" height="3.2" rx="0.7"/><rect x="4.6" y="5.6" width="10.8" height="3.2" rx="0.7"/><rect x="4.6" y="10.8" width="10.8" height="3.2" rx="0.7"/></g></svg>
<div class="t" style="left:1442.3px;top:268.4px;font-size:15.60px;letter-spacing:0.08px;color:#1c1e21;">Breakdown</div>
<svg class="abs" style="left:1533.3px;top:273.2px" width="10.0" height="6.0" viewBox="0 0 10 6"><path d="M1.2 0.3 H8.8 Q9.9 0.3 9.1 1.3 L5.7 5.3 Q5 6 4.3 5.3 L0.9 1.3 Q0.1 0.3 1.2 0.3Z" fill="#1c1e21"/></svg>
<div class="abs" style="left:1568.3px;top:257.0px;width:133.4px;height:38.0px;border:1px solid #ccd0d5;border-radius:6px;background:#fff;box-shadow:0 1px 1.5px rgba(0,0,0,.06)"></div>
<svg class="abs" style="left:1580.6px;top:266.8px" width="19" height="19" viewBox="0 0 19 19"><rect x="0.5" y="1" width="1.5" height="13" rx="0.5" fill="#1c1e21"/><rect x="3.3" y="0.6" width="1.5" height="14" rx="0.5" fill="#1c1e21"/><path d="M6.2 1.8 a1.3 1.3 0 0 1 1.3 -1.3 H13.4 a1.3 1.3 0 0 1 1.3 1.3 V13 a1.3 1.3 0 0 1 -1.3 1.3 H7.5 a1.3 1.3 0 0 1 -1.3 -1.3Z" fill="#1c1e21"/><path d="M8.1 3.5 H12.8 M8.1 5.6 H12.8" stroke="#fff" stroke-width="0.9"/><path d="M16.2 3.6 L17.7 4 L15.6 16.4 a1.1 1.1 0 0 1 -1.3 0.9 L8.2 16.3" fill="none" stroke="#1c1e21" stroke-width="1.4" stroke-linecap="round" stroke-linejoin="round"/></svg>
<div class="t" style="left:1607.3px;top:268.4px;font-size:15.60px;letter-spacing:0.23px;color:#1c1e21;">Reports</div>
<svg class="abs" style="left:1675.7px;top:273.2px" width="10.0" height="6.0" viewBox="0 0 10 6"><path d="M1.2 0.3 H8.8 Q9.9 0.3 9.1 1.3 L5.7 5.3 Q5 6 4.3 5.3 L0.9 1.3 Q0.1 0.3 1.2 0.3Z" fill="#1c1e21"/></svg>
<div class="abs" style="left:1710.7px;top:257.0px;width:145.0px;height:38.0px;border:1px solid #ccd0d5;border-radius:6px;background:#fff;box-shadow:0 1px 1.5px rgba(0,0,0,.06)"></div>
<div class="abs" style="left:1814.0px;top:257.0px;width:1.0px;height:38.0px;background:#c3c8ce"></div>
<svg class="abs" style="left:1724.5px;top:268px" width="16" height="16" viewBox="0 0 16 16"><g fill="none" stroke="#1c1e21" stroke-width="1.5" stroke-linecap="round" stroke-linejoin="round"><path d="M6.6 1.4 H3 a1.8 1.8 0 0 0 -1.8 1.8 V13 a1.8 1.8 0 0 0 1.8 1.8 H12.8 a1.8 1.8 0 0 0 1.8 -1.8 V9.6"/><path d="M9.8 1.2 H14.8 V6.2 M14.4 1.6 L7.6 8.4"/></g></svg>
<div class="t" style="left:1750.0px;top:268.4px;font-size:15.60px;letter-spacing:0.32px;color:#1c1e21;">Export</div>
<svg class="abs" style="left:1829.3px;top:273.2px" width="10.0" height="6.0" viewBox="0 0 10 6"><path d="M1.2 0.3 H8.8 Q9.9 0.3 9.1 1.3 L5.7 5.3 Q5 6 4.3 5.3 L0.9 1.3 Q0.1 0.3 1.2 0.3Z" fill="#1c1e21"/></svg>
<div class="abs" style="left:541.0px;top:1059.5px;width:54.0px;height:54.0px;border-radius:12.5px;overflow:hidden;background:linear-gradient(90deg,#2aa9f3 0,#2aa9f3 52%,#f2f5f8 52%,#f2f5f8 100%)"><div class="abs" style="left:15px;top:14px;width:2.2px;height:10px;background:#1a2a3a"></div><div class="abs" style="left:41px;top:14px;width:2.2px;height:10px;background:#1a2a3a"></div></div>
<div class="abs" style="left:613.0px;top:1059.5px;width:54.0px;height:54.0px;border-radius:12.5px;overflow:hidden;background:linear-gradient(180deg,#d2d2d2,#b9b9b9)"><div class="abs" style="left:9.0px;top:10.5px;width:10.6px;height:10.6px;border-radius:2.2px;background:#35cf3c"></div><div class="abs" style="left:21.8px;top:10.5px;width:10.6px;height:10.6px;border-radius:2.2px;background:#f7c52a"></div><div class="abs" style="left:34.6px;top:10.5px;width:10.6px;height:10.6px;border-radius:2.2px;background:#ff9d23"></div></div>
<div class="abs" style="left:685.0px;top:1059.5px;width:54.0px;height:54.0px;border-radius:12.5px;overflow:hidden;background:linear-gradient(180deg,#2b8df7,#1766e3)"><div class="abs" style="left:9px;top:14px;width:36px;height:26px;border-radius:3px;background:#f4f6fb"></div></div>
<div class="abs" style="left:707.0px;top:1053.2px;width:40.4px;height:23.8px;background:#ee3b3b;border-radius:12px"></div>
<div class="t" style="left:711.5px;top:1059.1px;font-size:13.60px;letter-spacing:-0.76px;color:#fff;">8,535</div>
<div class="abs" style="left:757.0px;top:1059.5px;width:54.0px;height:54.0px;border-radius:12.5px;overflow:hidden;background:#f3f3f3"><div class="abs" style="left:7px;top:5px;width:40px;height:40px;border-radius:50%;background:conic-gradient(from -60deg,#e33b2e 0 120deg,#f7c427 120deg 240deg,#2ea44f 240deg 360deg)"></div><div class="abs" style="left:17.5px;top:15.5px;width:19px;height:19px;border-radius:50%;background:#3b7de9;border:2.5px solid #fff"></div></div>
<div class="abs" style="left:829.0px;top:1059.5px;width:54.0px;height:54.0px;border-radius:12.5px;overflow:hidden;background:linear-gradient(180deg,#58e46a,#2fc548)"><div class="abs" style="left:9px;top:14px;width:25px;height:26px;border-radius:5px;background:#fff"></div><div class="abs" style="left:36px;top:17px;width:0;height:0;border-top:10px solid transparent;border-bottom:10px solid transparent;border-right:11px solid #fff"></div></div>
<div class="abs" style="left:908.0px;top:1058.0px;width:1.3px;height:22.0px;background:#3f403c"></div>
<div class="abs" style="left:933.0px;top:1059.5px;width:54.0px;height:54.0px;border-radius:12.5px;overflow:hidden;background:linear-gradient(180deg,#5fe676,#2fc750)"><div class="abs" style="left:8px;top:11.5px;width:38px;height:38px;border-radius:50%;border:4px solid #fff"></div></div>
<div class="abs" style="left:1005.0px;top:1059.5px;width:54.0px;height:54.0px;border-radius:12.5px;overflow:hidden;background:linear-gradient(180deg,#fb5c74,#f2334f)"><div class="abs" style="left:23px;top:9px;width:17px;height:6px;background:#fff;transform:skewY(-12deg)"></div><div class="abs" style="left:23px;top:11px;width:3.5px;height:14px;background:#fff"></div><div class="abs" style="left:36.5px;top:8px;width:3.5px;height:14px;background:#fff"></div></div>
<div class="abs" style="left:1077.0px;top:1059.5px;width:54.0px;height:54.0px;border-radius:12.5px;overflow:hidden;background:#0b63f3"><div class="abs" style="left:10px;top:7px;width:34px;height:36px;background:#fff;clip-path:polygon(50% 0,100% 22%,100% 60%,50% 100%,0 60%,0 22%)"></div></div>
<div class="abs" style="left:1149.0px;top:1059.5px;width:54.0px;height:54.0px;border-radius:12.5px;overflow:hidden;background:linear-gradient(180deg,#fbd53a 0,#fbd53a 9px,#f7f3e8 9px)"></div>
<div class="abs" style="left:1221.0px;top:1059.5px;width:54.0px;height:54.0px;border-radius:12.5px;overflow:hidden;background:#a9c5f1;border:3.5px solid #eef2f8"></div>
<div class="abs" style="left:1300.0px;top:1058.0px;width:1.3px;height:22.0px;background:#3f403c"></div>
<div class="abs" style="left:1328.0px;top:1061.0px;width:48.0px;height:24.0px;background:linear-gradient(90deg,#d9dbdb,#f1f2f2 50%,#cfd1d1);border-radius:3px 3px 0 0;clip-path:polygon(0 0,100% 0,92% 100%,8% 100%)"></div>
<div class="abs" style="left:1333.0px;top:1054.5px;width:39.0px;height:10.5px;background:conic-gradient(from 20deg at 45% 70%,#fff,#9aa,#f4f4f4,#667,#fff,#bcc,#fff);border-radius:5px 7px 2px 2px;clip-path:polygon(0 100%,8% 30%,30% 0,48% 40%,66% 5%,92% 35%,100% 100%)"></div>
</div>
<div id="phone">
<div class="t" style="left:70.0px;top:20.8px;font-size:23.50px;letter-spacing:0.99px;font-weight:bold;color:#0c0f14;">4:00</div>
<svg class="abs" style="left:395px;top:23px" width="30" height="19" viewBox="0 0 30 19"><rect x="0.7" y="11.3" width="5.3" height="6.7" rx="1.3" fill="#000"/><rect x="8.7" y="8" width="5.3" height="10" rx="1.3" fill="#000"/><rect x="16.7" y="4.6" width="5.2" height="13.4" rx="1.3" fill="#cfcfcf"/><rect x="24.4" y="1" width="5" height="17" rx="1.3" fill="#cfcfcf"/></svg>
<svg class="abs" style="left:433px;top:22.5px" width="26" height="19" viewBox="0 0 26 19"><path d="M13 18.6 L9.6 14.9 A4.9 4.9 0 0 1 16.4 14.9 Z" fill="#000"/><path d="M5.9 11.1 A10 10 0 0 1 20.1 11.1" fill="none" stroke="#000" stroke-width="3.1" stroke-linecap="butt"/><path d="M1.5 6.6 A16.2 16.2 0 0 1 24.5 6.6" fill="none" stroke="#000" stroke-width="3.1" stroke-linecap="butt"/></svg>
<div class="abs" style="left:468px;top:23px;width:36.5px;height:18.5px;border-radius:6px;background:linear-gradient(90deg,#000 0,#000 46%,#a9a9a9 46%,#a9a9a9 100%);overflow:hidden"></div>
<div class="abs" style="left:505.6px;top:29px;width:2.4px;height:6.5px;border-radius:0 2px 2px 0;background:#c9c9c9"></div>
<div class="t" style="left:475.0px;top:24.5px;font-size:17.50px;letter-spacing:2.53px;font-weight:bold;color:#fff;">45</div>
<svg class="abs" style="left:14px;top:74px" width="22" height="30" viewBox="0 0 22 30"><path d="M16.3 4.6 L4.9 15 L16.3 25.4" fill="none" stroke="#0c0f14" stroke-width="3.3" stroke-linecap="round" stroke-linejoin="round"/></svg>
<div class="t" style="left:245.0px;top:79.3px;font-size:20.50px;letter-spacing:-0.38px;font-weight:bold;color:#0c0f14;">Reach</div>
<svg class="abs" style="left:493px;top:72px" width="32" height="32" viewBox="0 0 32 32"><circle cx="16" cy="16" r="13.2" fill="none" stroke="#0c0f14" stroke-width="2.4"/><circle cx="16" cy="9.7" r="1.7" fill="#0c0f14"/><path d="M13.4 13.6 H16.9 V21.4 M13.2 21.6 H19.6" fill="none" stroke="#0c0f14" stroke-width="2.2"/></svg>
<div class="sep" style="left:0;top:116px;width:550px;background:#f5f5f5"></div>
<div class="abs" style="left:16.0px;top:133.0px;width:176.0px;height:40.0px;border-radius:9px;background:#f2f4f6"></div>
<div class="t" style="left:37.0px;top:144.4px;font-size:18.00px;letter-spacing:0.27px;font-weight:bold;color:#0c0f14;">Last 90 Days</div>
<svg class="abs" style="left:156px;top:147px" width="16" height="12" viewBox="0 0 16 12"><path d="M2.2 3 L8 8.8 L13.8 3" fill="none" stroke="#0c0f14" stroke-width="1.5" stroke-linecap="round" stroke-linejoin="round"/></svg>
<div class="t" style="left:407.5px;top:146.8px;font-size:18.00px;letter-spacing:0.49px;font-weight:bold;color:#0c0f14;">May 8 - Aug 5</div>
<div class="sep" style="left:0;top:191px;width:550px;background:#f8f8f8"></div>
<div class="t" style="left:201.7px;top:234.8px;font-size:30.30px;letter-spacing:1.48px;font-weight:bold;color:#0c0f14;">1,223,636</div>
<div class="t" style="left:191.7px;top:276.1px;font-size:20.50px;letter-spacing:0.17px;color:#0c0f14;">Accounts reached</div>
<div class="t" style="left:213.3px;top:314.9px;font-size:16.60px;letter-spacing:0.12px;font-weight:bold;color:#0c0f14;">98.4% from ads</div>
<svg class="abs" style="left:225px;top:359px" width="100" height="100" viewBox="0 0 100 100"><circle cx="50" cy="50.3" r="41" fill="none" stroke="#0c3f77" stroke-width="11.5"/><rect x="49" y="2" width="2" height="14" fill="#fff"/></svg>
<div class="t" style="left:143.3px;top:381.6px;font-size:15.60px;letter-spacing:0.01px;color:#3f9a67;">+47.6%</div>
<div class="t" style="left:145.7px;top:400.2px;font-size:20.40px;letter-spacing:1.50px;font-weight:bold;color:#0c0f14;">0.5%</div>
<div class="t" style="left:116.0px;top:424.6px;font-size:15.50px;letter-spacing:0.12px;color:#7b828a;">Followers</div>
<div class="abs" style="left:189.5px;top:428.0px;width:8.0px;height:8.0px;border-radius:50%;background:#2196f3"></div>
<div class="t" style="left:353.3px;top:390.9px;font-size:20.40px;letter-spacing:1.79px;font-weight:bold;color:#0c0f14;">99.5%</div>
<div class="abs" style="left:353.0px;top:418.6px;width:7.4px;height:7.4px;border-radius:50%;background:#0c3f77"></div>
<div class="t" style="left:366.7px;top:415.2px;font-size:15.50px;letter-spacing:0.44px;color:#7b828a;">Non-followers</div>
<div class="sep" style="left:20px;top:510px;width:508px;background:#f4f4f4"></div>
<div class="t" style="left:21.0px;top:536.4px;font-size:17.80px;letter-spacing:0.23px;color:#0c0f14;">Impressions</div>
<div class="t" style="left:446.7px;top:536.4px;font-size:17.80px;letter-spacing:0.30px;color:#0c0f14;">4,156,395</div>
<div class="t" style="left:486.0px;top:557.0px;font-size:15.80px;letter-spacing:0.48px;color:#3f9a67;">+40%</div>
<div class="sep" style="left:20px;top:608px;width:508px;background:#f4f4f4"></div>
<div class="t" style="left:21.5px;top:650.3px;font-size:20.60px;letter-spacing:0.12px;font-weight:bold;color:#0c0f14;">By content type</div>
<div class="abs" style="left:21.0px;top:711.5px;width:40.5px;height:38.5px;border-radius:8px;background:#e1eefb"></div>
<div class="t" style="left:31.8px;top:722.7px;font-size:16.40px;letter-spacing:-1.08px;font-weight:bold;color:#1b86dc;">All</div>
<div class="abs" style="left:72.2px;top:711.5px;width:93.8px;height:38.5px;border-radius:8px;background:#f2f4f6"></div>
<div class="t" style="left:83.0px;top:722.7px;font-size:16.40px;letter-spacing:-0.44px;font-weight:bold;color:#0c0f14;">Followers</div>
<div class="abs" style="left:177.7px;top:711.5px;width:129.3px;height:38.5px;border-radius:8px;background:#f2f4f6"></div>
<div class="t" style="left:188.5px;top:722.7px;font-size:16.40px;letter-spacing:-0.08px;font-weight:bold;color:#0c0f14;">Non-followers</div>
<div class="t" style="left:21.0px;top:782.4px;font-size:16.30px;letter-spacing:-0.77px;color:#1a1d21;">Reels</div>
<div class="t" style="left:484.0px;top:800.5px;font-size:16.40px;letter-spacing:0.18px;font-weight:bold;color:#0c0f14;">39.2K</div>
<div class="abs" style="left:21.0px;top:805.6px;width:249.9px;height:10.4px;border-radius:0 5.2px 5.2px 0;background:#0c3f77;overflow:hidden"><div style="position:absolute;left:0;top:0;bottom:0;width:22.6px;background:#2196f3;border-right:1.3px solid #d4e6f8"></div></div>
<div class="t" style="left:21.0px;top:839.9px;font-size:16.30px;letter-spacing:-0.54px;color:#1a1d21;">Posts</div>
<div class="t" style="left:484.0px;top:858.0px;font-size:16.40px;letter-spacing:0.18px;font-weight:bold;color:#0c0f14;">22.9K</div>
<div class="abs" style="left:21.0px;top:863.1px;width:145.0px;height:10.4px;border-radius:0 5.2px 5.2px 0;background:#0c3f77;overflow:hidden"><div style="position:absolute;left:0;top:0;bottom:0;width:26.6px;background:#2196f3;border-right:1.3px solid #d4e6f8"></div></div>
<div class="t" style="left:21.0px;top:897.3px;font-size:16.30px;letter-spacing:-0.12px;color:#1a1d21;">Stories</div>
<div class="t" style="left:483.0px;top:915.4px;font-size:16.40px;letter-spacing:1.11px;font-weight:bold;color:#0c0f14;">6,433</div>
<div class="abs" style="left:21.0px;top:920.5px;width:40.4px;height:10.4px;border-radius:0 5.2px 5.2px 0;background:#0c3f77;overflow:hidden"><div style="position:absolute;left:0;top:0;bottom:0;width:11.8px;background:#2196f3;border-right:1.3px solid #d4e6f8"></div></div>
<div class="t" style="left:21.0px;top:954.8px;font-size:16.30px;letter-spacing:-0.11px;color:#1a1d21;">Videos</div>
<div class="t" style="left:499.0px;top:972.9px;font-size:16.40px;letter-spacing:1.07px;font-weight:bold;color:#0c0f14;">462</div>
<div class="abs" style="left:21.0px;top:978.0px;width:5.4px;height:10.4px;border-radius:0 2px 2px 0;background:#0c3f77;overflow:hidden"><div style="position:absolute;left:0;top:0;bottom:0;width:3.2px;background:#2196f3;border-right:1.3px solid #d4e6f8"></div></div>
<div class="t" style="left:21.0px;top:1012.2px;font-size:16.30px;letter-spacing:-0.17px;color:#1a1d21;">Live Videos</div>
<div class="t" style="left:510.3px;top:1030.3px;font-size:16.40px;letter-spacing:-0.04px;font-weight:bold;color:#0c0f14;">37</div>
</div>
</body>
</html>
